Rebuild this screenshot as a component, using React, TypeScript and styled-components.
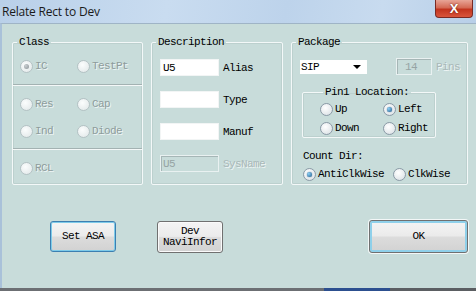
import React from 'react';
import styled, { createGlobalStyle } from 'styled-components';

const GlobalStyle = createGlobalStyle`
  html, body {
    margin: 0;
    padding: 0;
    width: 476px;
    height: 291px;
    overflow: hidden;
    background: #c8dcda;
  }
`;

const mono = `"Liberation Mono", "DejaVu Sans Mono", monospace`;

// Window chrome
const Window = styled.div`
  width: 476px;
  height: 291px;
  display: flex;
  flex-direction: column;
  font-family: ${mono};
  font-size: 11px;
  letter-spacing: -0.6px;
  color: #000;
`;

const TitleBar = styled.div`
  height: 23px;
  flex-shrink: 0;
  display: flex;
  align-items: flex-start;
  background: linear-gradient(100deg, #b9d0e9 0%, #c9dcf0 35%, #bdd3eb 60%, #c8dbef 80%, #b8cfe8 100%);
`;

const Title = styled.div`
  font-family: "Open Sans", "Liberation Sans", sans-serif;
  font-size: 12px;
  letter-spacing: -0.2px;
  padding: 3px 0 0 2px;
  color: #1a1a1a;
  flex: 1;
`;

const CloseButton = styled.div`
  width: 36px;
  height: 17px;
  margin-right: 3px;
  border: 1px solid #7a2a23;
  border-top: none;
  border-radius: 0 0 4px 4px;
  background: linear-gradient(#e8a597 0%, #d46a55 45%, #c2341e 55%, #d9553c 100%);
  display: flex;
  align-items: center;
  justify-content: center;
  color: #fff;
  font-family: "Liberation Sans", sans-serif;
  font-weight: bold;
  font-size: 13px;
  letter-spacing: 0;
  text-shadow: 0 0 2px #5a1208;
`;

const Body = styled.div`
  flex: 1;
  display: flex;
  flex-direction: column;
  border-left: 2px solid #a9c1d9;
  border-top: 1px solid #9fb4c6;
  padding: 12px 8px 0 10px;
`;

const Taskbar = styled.div`
  height: 3px;
  flex-shrink: 0;
  background: linear-gradient(90deg, #6c6f73 0%, #6c6f73 68%, #2c4f8f 68%, #2c4f8f 82%, #5b5e62 82%);
`;

// Groups
const Groups = styled.div`
  display: flex;
  gap: 8px;
`;

const Group = styled.fieldset<{ $w: number }>`
  width: ${(p) => p.$w}px;
  box-sizing: border-box;
  margin: 0;
  padding: 0;
  min-width: 0;
  border: 1px solid #f3f8f8;
  border-radius: 2px;
  box-shadow: inset 0 0 0 1px rgba(150, 170, 170, 0.25);
  height: 149px;
`;

const Legend = styled.legend`
  padding: 0 2px;
  margin-left: 4px;
  line-height: 12px;
`;

const Section = styled.div<{ $h: number; $top?: number; $sep?: boolean }>`
  height: ${(p) => p.$h}px;
  box-sizing: border-box;
  padding: ${(p) => p.$top ?? 0}px 0 0 7px;
  border-top: ${(p) => (p.$sep ? '1px solid #a3b2b2' : 'none')};
  box-shadow: ${(p) => (p.$sep ? 'inset 0 1px 0 #f4f8f8' : 'none')};
  display: grid;
  grid-template-columns: 57px 57px;
  align-content: start;
  row-gap: 13px;
`;

// Radio
const RadioItem = styled.label<{ $disabled?: boolean }>`
  display: flex;
  align-items: center;
  gap: 2px;
  height: 14px;
  color: ${(p) => (p.$disabled ? '#8e9c9c' : '#000')};
  text-shadow: ${(p) => (p.$disabled ? '1px 1px 0 #eef5f5' : 'none')};
  white-space: nowrap;
`;

const Circle = styled.span<{ $checked?: boolean; $disabled?: boolean }>`
  width: 11px;
  height: 11px;
  border-radius: 50%;
  flex-shrink: 0;
  border: 1px solid ${(p) => (p.$disabled ? '#b4c2c4' : '#8a9aa6')};
  background: ${(p) =>
    p.$disabled
      ? 'radial-gradient(circle at 40% 35%, #fbfdfd, #dfe6e7)'
      : 'radial-gradient(circle at 40% 35%, #ffffff, #d6dde2)'};
  display: flex;
  align-items: center;
  justify-content: center;
  &::after {
    content: '';
    display: ${(p) => (p.$checked ? 'block' : 'none')};
    width: 5px;
    height: 5px;
    border-radius: 50%;
    background: ${(p) =>
      p.$disabled
        ? 'radial-gradient(circle at 35% 35%, #c9cfd2, #8a9296)'
        : 'radial-gradient(circle at 35% 35%, #8fd0f5, #1b5b8c)'};
    box-shadow: ${(p) => (p.$disabled ? 'none' : '0 0 1px #0d3c66')};
  }
`;

const Radio = ({ label, checked, disabled }: { label: string; checked?: boolean; disabled?: boolean }) => (
  <RadioItem $disabled={disabled}>
    <Circle $checked={checked} $disabled={disabled} />
    {label}
  </RadioItem>
);

// Description fields
const FieldRow = styled.div`
  display: flex;
  align-items: center;
  gap: 4px;
  height: 17px;
`;

const FieldList = styled.div`
  display: flex;
  flex-direction: column;
  gap: 15px;
  padding: 11px 0 0 8px;
`;

const TextBox = styled.div<{ $w: number; $disabled?: boolean }>`
  width: ${(p) => p.$w}px;
  height: 17px;
  box-sizing: border-box;
  background: ${(p) => (p.$disabled ? 'transparent' : '#fff')};
  border: 1px solid ${(p) => (p.$disabled ? '#e9f1f1' : '#f2f5f5')};
  box-shadow: ${(p) => (p.$disabled ? 'inset 1px 1px 0 #a6b6b6' : 'none')};
  color: ${(p) => (p.$disabled ? '#96a4a4' : '#000')};
  padding: 2px 0 0 2px;
  line-height: 12px;
`;

const FieldLabel = styled.span<{ $disabled?: boolean; $ml?: number }>`
  margin-left: ${(p) => p.$ml ?? 0}px;
  color: ${(p) => (p.$disabled ? '#a9b8b8' : '#000')};
  text-shadow: ${(p) => (p.$disabled ? '1px 1px 0 #eef5f5' : 'none')};
`;

// Package
const PackageInner = styled.div`
  display: flex;
  flex-direction: column;
  padding: 10px 0 0 8px;
`;

const PackageTop = styled.div`
  display: flex;
  align-items: center;
  height: 17px;
`;

const Select = styled.div`
  width: 67px;
  height: 14px;
  box-sizing: border-box;
  background: #fff;
  display: flex;
  align-items: center;
  justify-content: space-between;
  padding: 0 6px 0 1px;
  margin-right: 29px;
`;

const Arrow = styled.span`
  width: 0;
  height: 0;
  border-left: 4px solid transparent;
  border-right: 4px solid transparent;
  border-top: 4px solid #000;
`;

const SubGroup = styled.fieldset`
  margin: 11px 0 0 2px;
  padding: 4px 0 0 17px;
  width: 134px;
  height: 52px;
  box-sizing: border-box;
  min-width: 0;
  border: 1px solid #f3f8f8;
  border-radius: 2px;
  box-shadow: inset 0 0 0 1px rgba(150, 170, 170, 0.25);
  display: grid;
  grid-template-columns: 63px 60px;
  row-gap: 5px;
  align-content: start;
`;

const SubLegend = styled.legend`
  padding: 0 2px;
  margin-left: 3px;
  line-height: 12px;
`;

const CountLabel = styled.div`
  margin: 12px 0 0 3px;
  line-height: 12px;
`;

const CountRow = styled.div`
  display: flex;
  gap: 9px;
  margin: 5px 0 0 3px;
`;

// Buttons
const ButtonRow = styled.div`
  display: flex;
  align-items: center;
  padding: 35px 0 0 38px;
`;

const Button = styled.div<{ $w: number; $h: number; $ml?: string; $variant?: 'focus' | 'default' }>`
  width: ${(p) => p.$w}px;
  height: ${(p) => p.$h}px;
  margin-left: ${(p) => p.$ml ?? '0'};
  box-sizing: border-box;
  display: flex;
  align-items: center;
  justify-content: center;
  text-align: center;
  line-height: 11px;
  border-radius: 3px;
  background: linear-gradient(#f4f4f4 0%, #ebebeb 48%, #dcdcdc 52%, #d2d2d2 100%);
  border: 1px solid ${(p) => (p.$variant === 'focus' ? '#3c7fb1' : '#707070')};
  box-shadow: ${(p) =>
    p.$variant === 'focus'
      ? 'inset 0 0 0 1px #7ecbe9'
      : p.$variant === 'default'
      ? 'inset 0 0 0 2px #8fd0ea, 0 0 0 1px #f3f7f7'
      : 'inset 0 0 0 1px #fafafa'};
`;

const App = () => {
  return (
    <Window>
      <GlobalStyle />
      <TitleBar>
        <Title>Relate Rect to Dev</Title>
        <CloseButton>X</CloseButton>
      </TitleBar>
      <Body>
        <Groups>
          <Group $w={131}>
            <Legend>Class</Legend>
            <Section $h={36} $top={11}>
              <Radio label="IC" checked disabled />
              <Radio label="TestPt" disabled />
            </Section>
            <Section $h={64} $top={12} $sep>
              <Radio label="Res" disabled />
              <Radio label="Cap" disabled />
              <Radio label="Ind" disabled />
              <Radio label="Diode" disabled />
            </Section>
            <Section $h={36} $top={12} $sep>
              <Radio label="RCL" disabled />
            </Section>
          </Group>

          <Group $w={132}>
            <Legend>Description</Legend>
            <FieldList>
              <FieldRow>
                <TextBox $w={59}>U5</TextBox>
                <FieldLabel>Alias</FieldLabel>
              </FieldRow>
              <FieldRow>
                <TextBox $w={59} />
                <FieldLabel>Type</FieldLabel>
              </FieldRow>
              <FieldRow>
                <TextBox $w={59} />
                <FieldLabel>Manuf</FieldLabel>
              </FieldRow>
              <FieldRow>
                <TextBox $w={59} $disabled>U5</TextBox>
                <FieldLabel $disabled>SysName</FieldLabel>
              </FieldRow>
            </FieldList>
          </Group>

          <Group $w={177}>
            <Legend>Package</Legend>
            <PackageInner>
              <PackageTop>
                <Select>
                  SIP
                  <Arrow />
                </Select>
                <TextBox $w={36} $disabled>&nbsp;14</TextBox>
                <FieldLabel $disabled $ml={4}>Pins</FieldLabel>
              </PackageTop>
              <SubGroup>
                <SubLegend>Pin1 Location:</SubLegend>
                <Radio label="Up" />
                <Radio label="Left" checked />
                <Radio label="Down" />
                <Radio label="Right" />
              </SubGroup>
              <CountLabel>Count Dir:</CountLabel>
              <CountRow>
                <Radio label="AntiClkWise" checked />
                <Radio label="ClkWise" />
              </CountRow>
            </PackageInner>
          </Group>
        </Groups>

        <ButtonRow>
          <Button $w={66} $h={31} $variant="focus">Set ASA</Button>
          <Button $w={66} $h={32} $ml="41px">Dev<br />NaviInfor</Button>
          <Button $w={99} $h={33} $ml="auto" $variant="default">OK</Button>
        </ButtonRow>
      </Body>
      <Taskbar />
    </Window>
  );
};

export default App;
